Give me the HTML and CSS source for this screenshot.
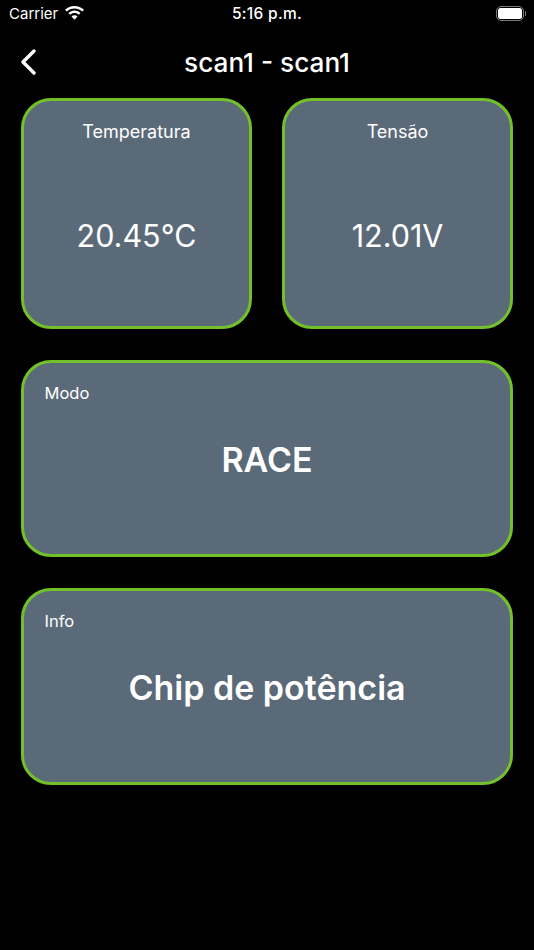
FILE: index.html
```html
<!DOCTYPE html>
<html lang="pt">
<head>
<meta charset="utf-8">
<title>scan1 - scan1</title>
<link rel="stylesheet" href="styles.css">
</head>
<body>
<div class="screen">
  <header class="status">
    <div class="status-left">
      <span class="carrier">Carrier</span>
      <svg class="wifi" width="19" height="14" viewBox="0 0 19 14"><path fill="#fff" d="M9.500 0C5.900 0 2.600 1.400 0 3.800l1.700 1.800C3.800 3.600 6.500 2.500 9.500 2.500s5.700 1.100 7.800 3.100L19 3.800C16.400 1.400 13.100 0 9.500 0z"/><path fill="#fff" d="M9.500 4.600c-2.300 0-4.400.9-6 2.400l1.700 1.800c1.100-1.100 2.600-1.700 4.300-1.700s3.200.6 4.300 1.700L15.500 7c-1.600-1.500-3.700-2.400-6-2.400z"/><path fill="#fff" d="M9.500 9.200c-1.100 0-2.200.4-3 1.200l3 3.300 3-3.300c-.8-.8-1.900-1.200-3-1.200z"/></svg>
    </div>
    <span class="clock">5:16 p.m.</span>
    <div class="battery"><span class="battery-body"><span class="battery-fill"></span></span><span class="battery-cap"></span></div>
  </header>
  <nav class="navbar">
    <svg class="back" width="16" height="26" viewBox="0 0 16 26"><path d="M14 2 L3 13 L14 24" fill="none" stroke="#fff" stroke-width="3.400" stroke-linecap="round" stroke-linejoin="round"/></svg>
    <h1 class="title">scan1 - scan1</h1>
  </nav>
  <main class="content">
    <div class="row">
      <section class="card square">
        <div class="square-label">Temperatura</div>
        <div class="square-value">20.45°C</div>
      </section>
      <section class="card square">
        <div class="square-label">Tensão</div>
        <div class="square-value">12.01V</div>
      </section>
    </div>
    <section class="card wide">
      <div class="wide-label">Modo</div>
      <div class="wide-value">RACE</div>
    </section>
    <section class="card wide">
      <div class="wide-label">Info</div>
      <div class="wide-value">Chip de potência</div>
    </section>
  </main>
</div>
</body>
</html>
```
FILE: styles.css
```css
* { box-sizing: border-box; margin: 0; padding: 0; }
html, body { background: #000; }
body { width: 534px; height: 950px; overflow: hidden; font-family: Inter, "Liberation Sans", sans-serif; color: #fff; }
.screen { width: 534px; height: 950px; display: flex; flex-direction: column; }
.status { height: 27px; display: flex; align-items: center; justify-content: space-between; padding: 0 8px 0 9px; position: relative; }
.status-left { display: flex; align-items: center; gap: 7px; }
.carrier { font-size: 15px; color: #fff; }
.wifi { margin-top: -1px; }
.clock { position: absolute; left: 0; right: 0; text-align: center; font-size: 15.500px; font-weight: 500; letter-spacing: 0.300px; }
.battery { display: flex; align-items: center; gap: 1px; }
.battery-body { width: 28px; height: 15px; border: 1.500px solid #7a7a7a; border-radius: 5px; padding: 1px; display: block; }
.battery-fill { display: block; width: 100%; height: 100%; background: #fff; border-radius: 2.500px; }
.battery-cap { width: 1.500px; height: 5px; background: #7a7a7a; border-radius: 0 1px 1px 0; }
.navbar { height: 71px; display: flex; align-items: center; justify-content: center; position: relative; }
.back { position: absolute; left: 20px; top: 22px; }
.title { font-size: 26.200px; font-weight: 500; line-height: 29px; }
.content { display: flex; flex-direction: column; gap: 31px; padding: 0 21px; }
.row { display: flex; justify-content: space-between; }
.card { background: #5b6a79; border: 3px solid #72c02a; border-radius: 30px; }
.square { width: 231px; height: 231px; text-align: center; padding-top: 20px; }
.square-label { font-size: 18px; line-height: 22px; }
.square-value { font-size: 30.500px; line-height: 36px; margin-top: 75px; }
.wide { height: 197px; padding: 19px 20.500px 0; }
.wide-label { font-size: 16.500px; line-height: 22px; }
.wide-value { font-size: 34px; font-weight: 600; line-height: 40px; text-align: center; margin-top: 36px; }
```
